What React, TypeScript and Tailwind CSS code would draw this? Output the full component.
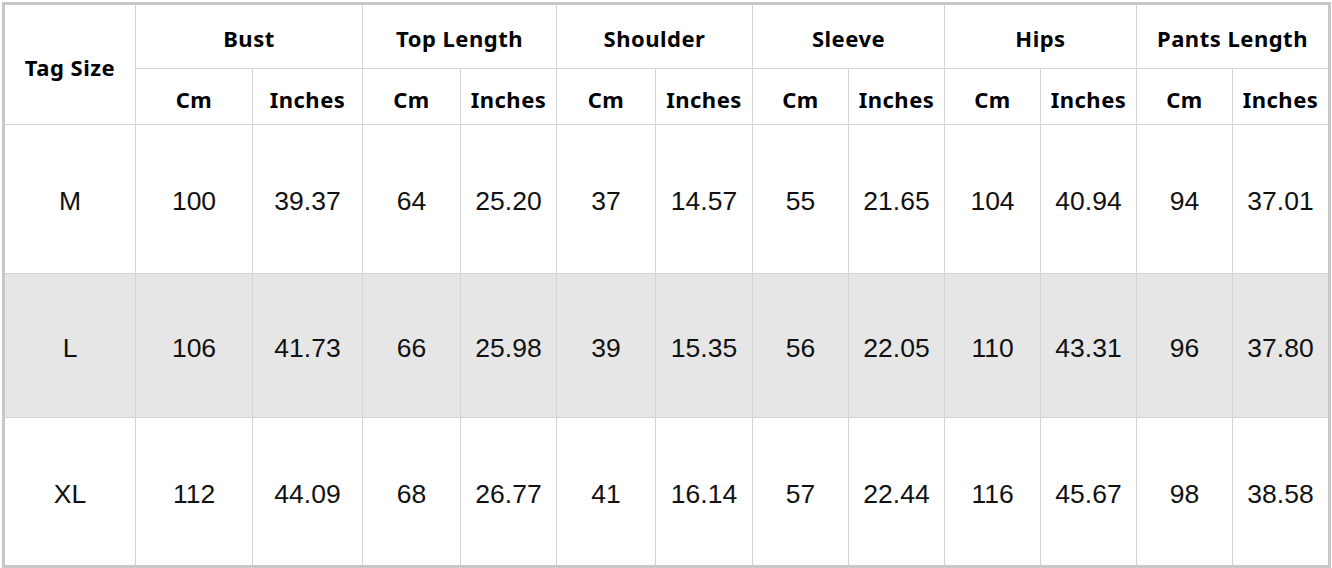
import React from "react";

type Group = { name: string; span: string };

const groups: Group[] = [
  { name: "Bust", span: "col-span-2" },
  { name: "Top Length", span: "col-span-2" },
  { name: "Shoulder", span: "col-span-2" },
  { name: "Sleeve", span: "col-span-2" },
  { name: "Hips", span: "col-span-2" },
  { name: "Pants Length", span: "col-span-2" },
];

const rows = [
  { size: "M", values: ["100", "39.37", "64", "25.20", "37", "14.57", "55", "21.65", "104", "40.94", "94", "37.01"] },
  { size: "L", values: ["106", "41.73", "66", "25.98", "39", "15.35", "56", "22.05", "110", "43.31", "96", "37.80"] },
  { size: "XL", values: ["112", "44.09", "68", "26.77", "41", "16.14", "57", "22.44", "116", "45.67", "98", "38.58"] },
];

const head =
  "flex items-center justify-center font-bold text-[22px] tracking-[0.5px] text-black [font-family:'Noto_Sans','Noto_Sans_CJK_SC',sans-serif]";
const body = "flex items-center justify-center text-[26.5px] text-[#111] [font-family:'Liberation_Sans',Arial,sans-serif]";

export default function App() {
  return (
    <div className="w-[1332px] h-[568px] bg-white pt-[2px] pl-[2px]">
      <div className="w-[1329px] border-[3px] border-[#c8c8c8] grid grid-cols-[131px_117px_110px_98px_96px_99px_97px_96px_96px_96px_96px_96px_95px] grid-rows-[64px_56px_149px_144px_147px]">
        <div className={`${head} row-span-2 border-r border-b border-[#d4d4d4] pt-1.5`}>Tag Size</div>
        {groups.map((g, i) => (
          <div
            key={g.name}
            className={`${head} ${g.span} border-b border-[#d4d4d4] pt-1 ${i < groups.length - 1 ? "border-r" : ""}`}
          >
            {g.name}
          </div>
        ))}
        {groups.map((g, i) => (
          <React.Fragment key={g.name + "-sub"}>
            <div className={`${head} border-r border-b border-[#d4d4d4] pt-1.5`}>Cm</div>
            <div className={`${head} border-b border-[#d4d4d4] pt-1.5 ${i < groups.length - 1 ? "border-r" : ""}`}>
              Inches
            </div>
          </React.Fragment>
        ))}
        {rows.map((r, ri) => {
          const last = ri === rows.length - 1;
          const bg = r.size === "L" ? "bg-[#e6e6e6]" : "bg-white";
          return (
            <React.Fragment key={r.size}>
              <div className={`${body} ${bg} border-r border-[#d4d4d4] pt-1.5 ${last ? "" : "border-b"}`}>{r.size}</div>
              {r.values.map((v, vi) => (
                <div
                  key={vi}
                  className={`${body} ${bg} border-[#d4d4d4] pt-1.5 ${last ? "" : "border-b"} ${
                    vi < r.values.length - 1 ? "border-r" : ""
                  }`}
                >
                  {v}
                </div>
              ))}
            </React.Fragment>
          );
        })}
      </div>
    </div>
  );
}
